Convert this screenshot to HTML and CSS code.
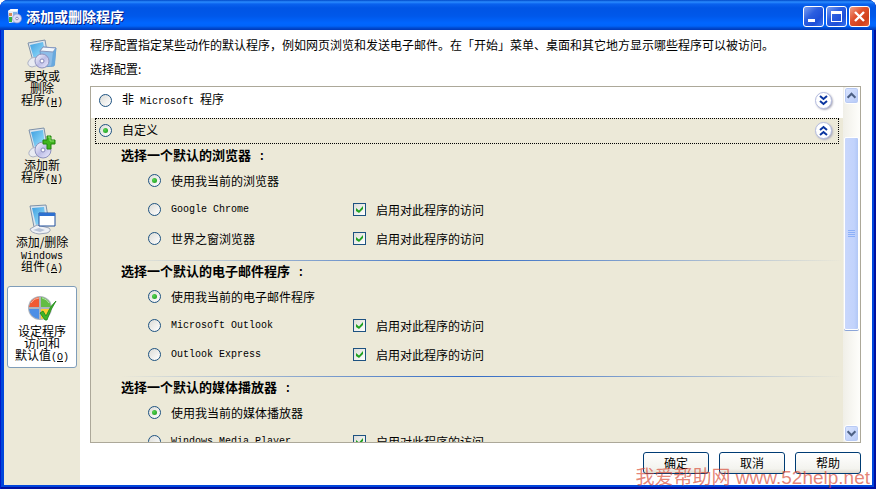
FILE: index.html
```html
<!DOCTYPE html>
<html lang="zh-CN">
<head>
  <meta charset="UTF-8">
  <meta name="viewport" content="width=device-width, initial-scale=1.0">
  <title>添加或删除程序</title>
  <link rel="stylesheet" href="styles.css">
</head>
<body>
  <div class="window">
    <!-- Title bar -->
    <header class="titlebar">
      <svg class="title-icon" viewBox="0 0 16 16">
        <path d="M2 3l3-2h7l-1 13-8 1z" fill="#e4edf8"/>
        <path d="M2 3h9l1-2H5z" fill="#fff"/>
        <path d="M3 5h3v3H3z" fill="#d98a58"/>
        <path d="M3 9h3v5H3z" fill="#33b043"/>
        <path d="M7 4h4v5H7z" fill="#7fb3ea"/>
        <circle cx="11" cy="10.500" r="4.500" fill="#dcdcf6" stroke="#8f94c8" stroke-width=".7"/>
        <circle cx="11" cy="10.500" r="1.300" fill="#fff" stroke="#7377b5" stroke-width=".8"/>
      </svg>
      <h1>添加或删除程序</h1>
      <div class="title-buttons">
        <button class="title-btn" type="button" aria-label="最小化">
          <svg viewBox="0 0 19 19"><path d="M4 12h7v3H4z" fill="#fff"/></svg>
        </button>
        <button class="title-btn" type="button" aria-label="最大化">
          <svg viewBox="0 0 19 19"><path d="M4 4h11v11H4zM5 7v7h9V7z" fill="#fff" fill-rule="evenodd"/></svg>
        </button>
        <button class="title-btn close" type="button" aria-label="关闭">
          <svg viewBox="0 0 19 19"><path d="M5 5l9 9M14 5l-9 9" stroke="#fff" stroke-width="2.400"/></svg>
        </button>
      </div>
    </header>

    <div class="content">
      <!-- Sidebar -->
      <nav class="sidebar">
        <a class="side-item" href="#change">
          <svg class="side-icon" viewBox="0 0 32 32">
            <path d="M2 5l17-3 3 17-15 4z" fill="#dce5ee" stroke="#7e91a8"/>
            <path d="M4 7l13-3 3 14-12 3z" fill="url(#screen)"/>
            <path d="M14 13l3-4 13 1-2 18-12 1z" fill="#8dbde8" stroke="#6e9ac8"/>
            <path d="M14 13l3-4 13 1-3 4z" fill="#f2f7fd" stroke="#8796bc"/>
            <path d="M27 14l3-4-1 17-4 2z" fill="#69a9de"/>
            <path d="M2 24q3-6 9-4l2 7-7 2q-5-1-4-5z" fill="#e9ebf2" stroke="#aeb3c4"/>
            <circle cx="16" cy="23" r="7" fill="url(#disc)" stroke="#8d91bd"/>
            <circle cx="16" cy="23" r="2" fill="#fff" stroke="#8387b8"/>
          </svg>
          <span>更改或<br>删除<br>程序<span class="key">(<u>H</u>)</span></span>
        </a>
        <a class="side-item" href="#add">
          <svg class="side-icon" viewBox="0 0 32 32">
            <path d="M3 3l15-2 3 18-13 4z" fill="#dce5ee" stroke="#7e91a8"/>
            <path d="M5 5l12-2 2 15-10 3z" fill="url(#screen)"/>
            <path d="M3 25q3-6 9-4l2 7-7 2q-5-1-4-5z" fill="#e9ebf2" stroke="#aeb3c4"/>
            <circle cx="17" cy="23" r="8" fill="url(#disc)" stroke="#8d91bd"/>
            <circle cx="17" cy="23" r="2" fill="#fff" stroke="#8387b8"/>
            <path d="M21 9h4v4h4v4h-4v5h-4v-5h-4v-4h4z" fill="#40b51f" stroke="#23850e"/>
            <path d="M22 10h2v4h4" fill="none" stroke="#8ce06c"/>
          </svg>
          <span>添加新<br>程序<span class="key">(<u>N</u>)</span></span>
        </a>
        <a class="side-item" href="#components">
          <svg class="side-icon" viewBox="0 0 32 32">
            <path d="M4 2l16-1 3 18-15 4z" fill="#dce5ee" stroke="#7e91a8"/>
            <path d="M6 4l12-1 2 15-10 3z" fill="url(#screen)"/>
            <path d="M4 25l7-4 12 3q3 3-2 5l-8 1q-8-1-9-5z" fill="#eef0f5" stroke="#9ca5b8"/>
            <path d="M7 26l6-2 6 2-5 2z" fill="#b8c4d8"/>
            <path d="M13 9h16v13H13z" fill="#fff" stroke="#1e4f9c"/>
            <path d="M13 9h16v3H13z" fill="#2e70d0"/>
          </svg>
          <span>添加/删除<br><span class="key">Windows</span><br>组件<span class="key">(<u>A</u>)</span></span>
        </a>
        <a class="side-item active" href="#defaults">
          <svg class="side-icon" viewBox="0 0 32 32">
            <circle cx="14" cy="15" r="12" fill="#aeb4bd"/>
            <path d="M13 14V4a11 11 0 0 0-10 10z" fill="#f05a32"/>
            <path d="M15 14V4a11 11 0 0 1 10 10z" fill="#62bd43"/>
            <path d="M13 16v10A11 11 0 0 1 3 16z" fill="#4c8fe6"/>
            <path d="M15 16v10a11 11 0 0 0 10-10z" fill="#fbce32"/>
            <path d="M5 10q3-5 8-5M16 5q5 1 7 5" fill="none" stroke="#fff" stroke-opacity=".5"/>
            <path d="M14 20l3-2 3 5q4-10 10-15-6 9-9 19h-2z" fill="#3fb52b" stroke="#1d8617" stroke-width=".8"/>
          </svg>
          <span>设定程序<br>访问和<br>默认值<span class="key">(<u>O</u>)</span></span>
        </a>
      </nav>

      <!-- Program access and defaults -->
      <main class="main">
        <p>程序配置指定某些动作的默认程序，例如网页浏览和发送电子邮件。在「开始」菜单、桌面和其它地方显示哪些程序可以被访问。</p>
        <p>选择配置:</p>

        <div class="list">
          <div class="list-body">
            <div class="config">
              <label><input type="radio" name="config"><span>非<span class="latin"> Microsoft </span>程序</span></label>
              <button class="expander" type="button" aria-label="展开">
                <svg viewBox="0 0 17 17"><path d="M5 4l3.500 3L12 4M5 9l3.500 3L12 9"/></svg>
              </button>
            </div>
            <div class="config selected">
              <label><input type="radio" name="config" checked>自定义</label>
              <button class="expander" type="button" aria-label="折叠">
                <svg viewBox="0 0 17 17"><path d="M5 8l3.500-3L12 8M5 13l3.500-3 3.500 3"/></svg>
              </button>
            </div>

            <section class="group">
              <h2>选择一个默认的浏览器<span class="colon"> :</span></h2>
              <div class="option">
                <label><input type="radio" name="browser" checked>使用我当前的浏览器</label>
              </div>
              <div class="option">
                <label><input type="radio" name="browser"><span class="latin">Google Chrome</span></label>
                <label><input type="checkbox" checked>启用对此程序的访问</label>
              </div>
              <div class="option">
                <label><input type="radio" name="browser">世界之窗浏览器</label>
                <label><input type="checkbox" checked>启用对此程序的访问</label>
              </div>
            </section>

            <section class="group">
              <h2>选择一个默认的电子邮件程序<span class="colon"> :</span></h2>
              <div class="option">
                <label><input type="radio" name="mail" checked>使用我当前的电子邮件程序</label>
              </div>
              <div class="option">
                <label><input type="radio" name="mail"><span class="latin">Microsoft Outlook</span></label>
                <label><input type="checkbox" checked>启用对此程序的访问</label>
              </div>
              <div class="option">
                <label><input type="radio" name="mail"><span class="latin">Outlook Express</span></label>
                <label><input type="checkbox" checked>启用对此程序的访问</label>
              </div>
            </section>

            <section class="group">
              <h2>选择一个默认的媒体播放器<span class="colon"> :</span></h2>
              <div class="option">
                <label><input type="radio" name="media" checked>使用我当前的媒体播放器</label>
              </div>
              <div class="option">
                <label><input type="radio" name="media"><span class="latin">Windows Media Player</span></label>
                <label><input type="checkbox" checked>启用对此程序的访问</label>
              </div>
            </section>
          </div>

          <div class="scrollbar">
            <button class="scroll-btn" type="button" aria-label="向上滚动">
              <svg viewBox="0 0 15 15"><path d="M3 10l4.500-4.500L12 10"/></svg>
            </button>
            <div class="track">
              <div class="thumb"><i></i><i></i><i></i><i></i></div>
            </div>
            <button class="scroll-btn" type="button" aria-label="向下滚动">
              <svg viewBox="0 0 15 15"><path d="M3 5l4.500 4.500L12 5"/></svg>
            </button>
          </div>
        </div>

        <div class="actions">
          <button type="button">确定</button>
          <button type="button">取消</button>
          <button type="button">帮助</button>
        </div>
      </main>
    </div>
    <div class="watermark">我爱帮助网 www.52help.net</div>
  </div>

  <!-- Shared gradients -->
  <svg class="defs">
    <linearGradient id="screen" x1="0" y1="0" x2="1" y2="1">
      <stop offset="0" stop-color="#3f9fe0"/>
      <stop offset="1" stop-color="#a4e8ff"/>
    </linearGradient>
    <linearGradient id="disc" x1="0" y1="0" x2="1" y2="1">
      <stop offset="0" stop-color="#fff"/>
      <stop offset=".5" stop-color="#bdbde6"/>
      <stop offset="1" stop-color="#eef"/>
    </linearGradient>
  </svg>
</body>
</html>
```

FILE: styles.css
```css
* {
  margin: 0;
  padding: 0;
  box-sizing: border-box;
}

body {
  font-family: "Noto Sans CJK SC", sans-serif;
  font-size: 12px;
  color: #000;
  background: #fff;
  overflow: hidden;
}

button, input {
  font: inherit;
}

svg {
  display: block;
}

.defs {
  position: absolute;
  width: 0;
  height: 0;
}

.window {
  position: relative;
  display: flex;
  flex-direction: column;
  height: 100vh;
  padding: 0 4px 4px;
  background: #0046dc;
  border-radius: 8px 8px 0 0;
  box-shadow: inset 1px 0 #0019c8, inset -2px 0 #0010a0, inset 0 -2px #0010a0;
  overflow: hidden;
}

/* Title bar */
.titlebar {
  display: flex;
  align-items: center;
  flex: none;
  height: 30px;
  margin: 0 -4px;
  padding: 2px 6px 0 6px;
  background: linear-gradient(#0049c8 0, #2a8cff 2px, #0a62ee 4px, #0055e5 8px, #0058ea 16px, #0066ff 23px, #0064fa 26px, #004bd0 28px, #0038b8 30px);
}

.title-icon {
  width: 16px;
  height: 16px;
}

h1 {
  flex: 1;
  margin-left: 4px;
  font-size: 14px;
  line-height: 20px;
  color: #fff;
  text-shadow: 1px 1px #0a1e82;
}

.title-buttons {
  display: flex;
  gap: 2px;
}

.title-btn {
  width: 21px;
  height: 21px;
  border: 1px solid #fff;
  border-radius: 3px;
  background: linear-gradient(135deg, #7c9ff0, #2b5ee0 40%, #1d4fd8 70%, #3874f0);
}

.title-btn.close {
  background: linear-gradient(135deg, #f0a088, #e0512d 40%, #d0401a 75%, #e8623a);
}

.content {
  display: flex;
  flex: 1;
  min-height: 0;
  background: #fff;
}

/* Sidebar */
.sidebar {
  display: flex;
  flex-direction: column;
  flex: none;
  gap: 7px;
  width: 76px;
  padding: 1px 3px;
  background: #ece9d8;
}

.side-item {
  padding: 6px 0;
  border: 1px solid transparent;
  border-radius: 3px;
  color: #000;
  line-height: 12px;
  text-align: center;
  text-decoration: none;
}

.side-item.active {
  background: #fff;
  border-color: #7f9db9;
}

.side-item > span {
  display: block;
}

.side-icon {
  width: 32px;
  height: 32px;
  margin: 0 auto;
}

.key, .latin {
  font-family: "Liberation Mono", monospace;
  font-size: 10px;
}

/* keep the smaller latin text from stretching its line */
.key, .colon {
  line-height: 0;
}

/* Main pane */
.main {
  display: flex;
  flex-direction: column;
  flex: 1;
  min-width: 0;
  padding: 3px 11px 11px 10px;
}

.main p {
  line-height: 24px;
  white-space: nowrap;
}

.list {
  display: flex;
  flex: 1;
  min-height: 0;
  margin: 5px 0 9px;
  border: 1px solid #aca899;
  background: #ece9d8;
}

.list-body {
  flex: 1;
  overflow: hidden;
}

label {
  display: flex;
  align-items: center;
  gap: 10px;
  line-height: 16px;
  white-space: nowrap;
}

.config {
  display: flex;
  align-items: center;
  justify-content: space-between;
  height: 31px;
  padding: 0 11px 5px 8px;
  background: #fff;
}

.config.selected {
  height: 26px;
  margin: 0 4px;
  padding: 0 6px 2px 3px;
  border: 1px dotted #000;
  background: #ece9d8;
}

.expander {
  width: 17px;
  height: 17px;
  border: 1px solid #b4bce0;
  border-radius: 50%;
  background: #fff;
  box-shadow: 1px 1px 2px #aab;
}

.expander svg {
  margin: -1px;
  fill: none;
  stroke: #0a35a0;
  stroke-width: 2;
}

.group {
  padding: 0 0 7px 57px;
}

.group + .group {
  background: linear-gradient(90deg, transparent 4%, #316ac5 50%, transparent) no-repeat 0 0 / 100% 1px;
}

h2 {
  height: 22px;
  margin-left: -27px;
  font-size: 13px;
  line-height: 22px;
  white-space: nowrap;
}

.colon {
  font-family: "Liberation Mono", monospace;
  font-size: 12px;
}

.option {
  display: grid;
  grid-template-columns: 205px 1fr;
  align-items: center;
  height: 29px;
}

/* Radios and tick boxes */
input {
  display: grid;
  place-items: center;
  flex: none;
  width: 13px;
  height: 13px;
  appearance: none;
  border: 1px solid #1d5281;
  background: linear-gradient(135deg, #dcdcd7, #fff);
}

input[type="radio"] {
  border-radius: 50%;
}

input:checked::before {
  content: "";
}

input[type="radio"]:checked::before {
  width: 5px;
  height: 5px;
  border-radius: 50%;
  background: radial-gradient(circle at 35% 35%, #55d551, #1a951a);
}

input[type="checkbox"]:checked::before {
  width: 7px;
  height: 7px;
  background: #21a121;
  clip-path: polygon(0 29%, 43% 64%, 100% 0, 100% 43%, 43% 100%, 0 71%);
}

/* Scrollbar */
.scrollbar {
  display: flex;
  flex-direction: column;
  width: 17px;
  padding: 0 1px;
  background: linear-gradient(90deg, #f0efe8, #fefefb);
}

.scroll-btn {
  flex: none;
  height: 17px;
  border: 1px solid #fff;
  border-radius: 3px;
  background: linear-gradient(135deg, #dce6ff, #b5c9f7);
  box-shadow: inset 0 0 0 1px #b8caf4;
}

.scroll-btn svg {
  width: 13px;
  height: 15px;
  fill: none;
  stroke: #4d6185;
  stroke-width: 2.4;
}

.track {
  display: grid;
  flex: 1;
  grid-template-rows: 33fr 193fr 95fr;
}

.thumb {
  display: flex;
  flex-direction: column;
  align-items: center;
  justify-content: center;
  gap: 1px;
  grid-row: 2;
  border: 1px solid #fff;
  border-radius: 2px;
  background: linear-gradient(90deg, #c9d7fc, #c2d3fc 70%, #b2c8f6);
  box-shadow: 0 1px #8ba5d8;
}

.thumb i {
  width: 7px;
  height: 1px;
  background: #8cb0f8;
}

/* Bottom buttons */
.actions {
  display: flex;
  justify-content: flex-end;
  gap: 10px;
}

.actions button {
  width: 66px;
  height: 22px;
  border: 1px solid #003c74;
  border-radius: 3px;
  background: linear-gradient(#fff, #f3f3ee 80%, #dcd8cc);
  line-height: 18px;
}

.watermark {
  position: absolute;
  right: 6px;
  bottom: 0;
  color: rgba(214, 62, 40, 0.65);
  font-family: "Liberation Sans", "Noto Sans CJK SC", sans-serif;
  font-size: 19px;
  line-height: 22px;
  white-space: nowrap;
  pointer-events: none;
}
```
